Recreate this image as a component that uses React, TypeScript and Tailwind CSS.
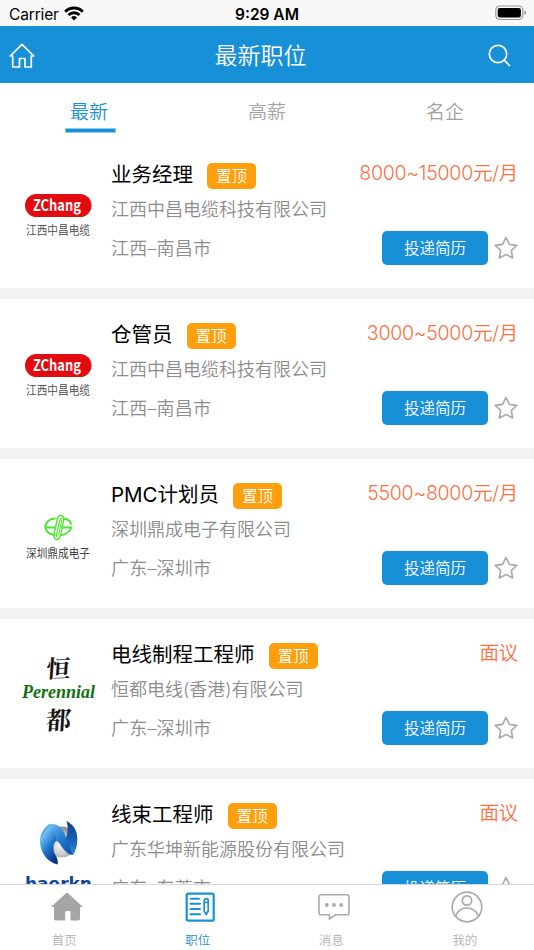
import type { ReactNode } from "react";

interface Job {
  id: number;
  title: string;
  company: string;
  location: string;
  salary: string;
  logo: ReactNode;
}

const SANS = "font-['Inter','Noto_Sans_CJK_SC',sans-serif]";

const ZChangLogo = () => (
  <svg width="93" height="80" viewBox="0 0 93 80">
    <rect x="7" y="20" width="66.500" height="23" rx="11.500" fill="#e30b0f" />
    <text
      x="15"
      y="37"
      textLength="48"
      lengthAdjust="spacingAndGlyphs"
      fontSize="15.500"
      fontWeight="700"
      fontFamily="'Noto Sans CJK SC', sans-serif"
      fill="#fff"
    >
      ZChang
    </text>
    <text
      x="8"
      y="60.500"
      textLength="64"
      lengthAdjust="spacingAndGlyphs"
      fontSize="12.500"
      fontWeight="350"
      fontFamily="'Noto Sans CJK SC', sans-serif"
      fill="#444"
    >
      江西中昌电缆
    </text>
  </svg>
);

const DingchengLogo = () => (
  <svg width="93" height="80" viewBox="0 0 93 80">
    <g fill="none" stroke="#4be62c" strokeLinecap="round">
      <path d="M36.500 24.500C30.500 25 27.300 29 27.300 33s3.700 7.500 9.200 8M28 33.500h9.500" strokeWidth="2" />
      <path d="M45.500 24.500c4.500.7 7.300 3 7.500 5.500M44 33.500h9.300c-.8 3.500-5 7-10.300 7.800" strokeWidth="1.800" />
      <path d="M43 21.500c-2.300 0-3.300 1.300-3.800 3.500l-3 15c-.5 3 0 5 1.800 5.300 2.300.2 4-1.500 4.600-4.300l3-14.500c.5-3-.4-5-2.600-5z" strokeWidth="1.300" />
      <path d="M43.500 24c-1.200 0-1.700 1-2 2.500l-2.800 13.500c-.3 1.500-.3 2.500-.5 3" strokeWidth="1.200" />
      <path d="m43.700 26-3.100 15" strokeWidth="1" />
    </g>
    <text
      x="8"
      y="64"
      textLength="64"
      lengthAdjust="spacingAndGlyphs"
      fontSize="12.500"
      fontFamily="'Noto Sans CJK SC', sans-serif"
      fill="#444"
    >
      深圳鼎成电子
    </text>
  </svg>
);

const PerennialLogo = () => (
  <svg width="93" height="100" viewBox="0 -10 93 100" className="-mt-[10px]">
    <g fontFamily="'Noto Serif CJK SC', 'Noto Sans CJK SC', serif" fontWeight="700" fill="#181414">
      <text x="30" y="23.500" fontSize="24" transform="skewX(-6) rotate(-2 40 16)">
        恒
      </text>
      <text x="35" y="75.500" fontSize="25" transform="skewX(-6) rotate(-2 40 66)">
        都
      </text>
    </g>
    <text
      x="4"
      y="44"
      textLength="73"
      lengthAdjust="spacingAndGlyphs"
      fontSize="18"
      fontWeight="700"
      fontStyle="italic"
      fontFamily="'Liberation Serif', serif"
      fill="#10700f"
    >
      Perennial
    </text>
  </svg>
);

const HaerknLogo = () => (
  <svg width="93" height="90" viewBox="0 0 93 90">
    <defs>
      <linearGradient id="ribbonLeft" x1=".1" y1="0" x2=".7" y2="1">
        <stop offset="0" stopColor="#0a50a8" />
        <stop offset=".25" stopColor="#6fc0f6" />
        <stop offset=".6" stopColor="#1f74cb" />
        <stop offset="1" stopColor="#0a2f86" />
      </linearGradient>
      <linearGradient id="ribbonMiddle" x1="0" y1="0" x2="1" y2="1">
        <stop offset="0" stopColor="#7ac4f5" />
        <stop offset=".45" stopColor="#2b83d6" />
        <stop offset="1" stopColor="#0a479e" />
      </linearGradient>
      <linearGradient id="ribbonRight" x1="0" y1="0" x2="0" y2="1">
        <stop offset="0" stopColor="#0a3f93" />
        <stop offset=".6" stopColor="#1763b5" />
        <stop offset="1" stopColor="#2f8fe0" />
      </linearGradient>
      <radialGradient id="ball" cx=".45" cy=".6" r=".6">
        <stop offset="0" stopColor="#f4f4f4" />
        <stop offset=".5" stopColor="#c8cacc" />
        <stop offset="1" stopColor="#8a8d90" />
      </radialGradient>
    </defs>
    <circle cx="43.500" cy="28" r="15.500" fill="url(#ball)" />
    <path d="M48.500 7c7 3.500 11 10 10.800 18-.2 7-1.500 12.500-4.300 16-4-3-7-8-8.500-14 2.500-4 4.500-12 2-20z" fill="url(#ribbonRight)" />
    <path d="M30 10.500c7-2 13 1.500 16 8 3 7 5 15 9 22.500-6-.8-10-6-13-11-3-4.500-7-4.500-9 0-3-7-5-13-3-19.500z" fill="url(#ribbonMiddle)" />
    <path d="M33 9.800c-6 2-11.300 9.700-11 18.200.4 10 6.500 20 17.700 22.500.3-3.500-.2-5.500-1.700-8.500-3.500-5.500-3.500-12 .5-15.500-1-5-3-11-5.500-16.700z" fill="url(#ribbonLeft)" />
    <text
      x="7"
      y="76"
      textLength="67"
      lengthAdjust="spacingAndGlyphs"
      fontSize="18.500"
      fontWeight="700"
      fontFamily="'DejaVu Sans', sans-serif"
      fill="#0d479d"
    >
      haerkn
    </text>
  </svg>
);

const JOBS: Job[] = [
  {
    id: 1,
    title: "业务经理",
    company: "江西中昌电缆科技有限公司",
    location: "江西–南昌市",
    salary: "8000~15000元/月",
    logo: <ZChangLogo />,
  },
  {
    id: 2,
    title: "仓管员",
    company: "江西中昌电缆科技有限公司",
    location: "江西–南昌市",
    salary: "3000~5000元/月",
    logo: <ZChangLogo />,
  },
  {
    id: 3,
    title: "PMC计划员",
    company: "深圳鼎成电子有限公司",
    location: "广东–深圳市",
    salary: "5500~8000元/月",
    logo: <DingchengLogo />,
  },
  {
    id: 4,
    title: "电线制程工程师",
    company: "恒都电线(香港)有限公司",
    location: "广东–深圳市",
    salary: "面议",
    logo: <PerennialLogo />,
  },
  {
    id: 5,
    title: "线束工程师",
    company: "广东华坤新能源股份有限公司",
    location: "广东–东莞市",
    salary: "面议",
    logo: <HaerknLogo />,
  },
];

const StatusBar = () => (
  <div className="grid h-[26px] shrink-0 grid-cols-3 items-center bg-[#f8f8f8] px-[9px] text-[15.5px] leading-none text-black">
    <div className="flex items-center gap-[6px] pt-[3px]">
      <span className="tracking-[-0.15px]">Carrier</span>
      <svg width="20" height="15" viewBox="0 0 20 15" className="-mt-[3px] -ml-[1px]">
        <g fill="none" stroke="#000" strokeWidth="2.900">
          <path d="M1.200 5.700a12.400 12.400 0 0 1 17.600 0" />
          <path d="M4.500 9a7.800 7.800 0 0 1 11 0" />
        </g>
        <path d="M10 14.500 7 11.500a4.300 4.300 0 0 1 6 0z" />
      </svg>
    </div>
    <div className="pt-[3px] text-center font-semibold">9:29 AM</div>
    <div className="flex justify-end">
      <svg width="32" height="16" viewBox="0 0 32 16" className="-mr-[2px]">
        <rect x=".8" y="1" width="27" height="13.500" rx="4" fill="none" stroke="#999" strokeWidth="1.200" />
        <rect x="2.700" y="2.900" width="23.200" height="9.700" rx="2" />
        <path d="M29.500 5.500c2 .8 2 3.700 0 4.500z" fill="#888" />
      </svg>
    </div>
  </div>
);

const Header = () => (
  <header className="flex h-[57px] shrink-0 items-center justify-between bg-[#1890d7] pr-[25px] pl-[9px] text-white">
    <svg width="27" height="26" viewBox="0 0 27 26" fill="none" stroke="currentColor" strokeWidth="1.700" strokeLinejoin="round" strokeLinecap="round" className="mt-[2px]">
      <path d="M3.700 13H1.200L13 1.300 24.800 13h-2.500v11H16v-8.500h-5.500V24H3.700z" />
    </svg>
    <h1 className="mr-[3px] pt-[3px] text-[23px] leading-none font-[350]">最新职位</h1>
    <svg width="23" height="23" viewBox="0 0 23 23" fill="none" stroke="currentColor" strokeWidth="1.700" strokeLinecap="round" className="mt-[1px] -mr-[2px]">
      <circle cx="10" cy="10" r="8.700" />
      <path d="m16.200 16.200 5.300 5.300" />
    </svg>
  </header>
);

const Tabs = () => (
  <div className="grid h-[56px] shrink-0 grid-cols-3 bg-white text-center text-[19px] leading-[60px] font-[350] text-[#a3a3a3]">
    <div className="flex flex-col items-center pl-[2px] text-[#1890d7]">
      <span className="mr-[2px] h-[45px]">最新</span>
      <span className="h-[5px] w-[51px] border border-[#8fc9ec] bg-[#1890d7]" />
    </div>
    <div>高薪</div>
    <div>名企</div>
  </div>
);

const Star = () => (
  <svg width="24" height="24" viewBox="0 0 24 24" fill="none" stroke="#aaa" strokeWidth="1.700" strokeLinejoin="round" className="-ml-[1px]">
    <path d="m12 1.500 3.300 6.800 7.500 1-5.500 5.200 1.400 7.500L12 18.500 5.300 22l1.400-7.500L1.200 9.300l7.500-1z" />
  </svg>
);

const JobCard = ({ job }: { job: Job }) => (
  <article className="flex h-[160px] shrink-0 border-b-[11px] border-[#f2f2f2] bg-white pr-[16px] pl-[18px]">
    <div className="mt-[35px] w-[93px] shrink-0">{job.logo}</div>
    <div className="min-w-0 flex-1 pt-[24px] leading-none font-[350]">
      <div className="flex h-[26px] items-center">
        <h2 className="-mt-[1px] text-[20.5px] font-normal text-black">{job.title}</h2>
        <span className="ml-[14px] h-[26px] w-[49px] rounded-[5px] bg-[#ff9f0d] text-center text-[15.5px] leading-[27px] text-white">
          置顶
        </span>
        <span className="-mt-[4px] ml-auto text-[19.5px] tracking-[-0.25px] text-[#ff7043]">{job.salary}</span>
      </div>
      <p className="mt-[11px] h-[18px] pt-px text-[18px] text-[#8c8c8c]">{job.company}</p>
      <div className="mt-[13px] flex h-[34px] items-center">
        <span className="pt-[2px] text-[18px] tracking-[0.2px] text-[#8c8c8c]">{job.location}</span>
        <button type="button" className="mr-[7px] ml-auto h-[34px] w-[106px] rounded-[5px] bg-[#1890d7] pt-px text-[15.5px] text-white">
          投递简历
        </button>
        <Star />
      </div>
    </div>
  </article>
);

const NAV_ITEMS = [
  {
    label: "首页",
    active: false,
    icon: (
      <svg width="32" height="32" viewBox="0 0 32 32" fill="#a5a5a5">
        <path d="M15 2.200q1-.9 2 0l14.200 13q.6.800-.4.800H29v11.500a2 2 0 0 1-2 2h-7.500v-8.200q0-1.300-1.300-1.300h-2.700q-1.300 0-1.300 1.300v8.200H5a2 2 0 0 1-2-2V16H1.200q-1 0-.4-.8z" />
      </svg>
    ),
  },
  {
    label: "职位",
    active: true,
    icon: (
      <svg width="32" height="32" viewBox="0 0 32 32" fill="none" stroke="#1890d7">
        <rect x="2.700" y="2.700" width="27" height="27" rx="1.500" strokeWidth="2.200" />
        <path d="M7 7.700h8M6.500 12.800h9.500M6.500 18h9.500M6.500 23.300h9.500" strokeWidth="2" strokeLinecap="round" />
        <path d="M20.200 9.500c0-2.500 4-2.500 4 0v10.500L22.200 23.500l-2-3.500zM20.200 11.500h4" strokeWidth="1.700" strokeLinejoin="round" />
      </svg>
    ),
  },
  {
    label: "消息",
    active: false,
    icon: (
      <svg width="32" height="32" viewBox="0 0 32 32" fill="none" stroke="#aaa">
        <path d="M3 3.700h26a2 2 0 0 1 2 2v16.100a2 2 0 0 1-2 2H17.500L11.500 28v-4.200H3a2 2 0 0 1-2-2V5.700a2 2 0 0 1 2-2z" strokeWidth="1.600" strokeLinejoin="miter" />
        <g fill="#aaa" stroke="none">
          <circle cx="8.800" cy="14" r="1.900" />
          <circle cx="16" cy="14" r="1.900" />
          <circle cx="23.200" cy="14" r="1.900" />
        </g>
      </svg>
    ),
  },
  {
    label: "我的",
    active: false,
    icon: (
      <svg width="32" height="32" viewBox="0 0 32 32" fill="none" stroke="#aaa" strokeWidth="1.700">
        <circle cx="16" cy="16" r="14.800" />
        <circle cx="16" cy="9.500" r="4.700" />
        <path d="M4.500 25.300c2-5.500 6.200-8.300 11.500-8.300s9.500 2.800 11.500 8.300" />
      </svg>
    ),
  },
];

const BottomNav = () => (
  <nav className="grid h-[66px] shrink-0 grid-cols-4 border-t border-[#d8d8d8] bg-white">
    {NAV_ITEMS.map((item) => (
      <div key={item.label} className="flex flex-col items-center pt-[6px]">
        {item.icon}
        <span
          className={`mt-[11px] mr-[5px] text-[12.5px] leading-[13px] font-[350] ${
            item.active ? "text-[#1890d7]" : "text-[#b2b2b2]"
          }`}
        >
          {item.label}
        </span>
      </div>
    ))}
  </nav>
);

export default function App() {
  return (
    <div className={`flex h-[950px] w-[534px] flex-col overflow-hidden bg-white ${SANS}`}>
      <StatusBar />
      <Header />
      <Tabs />
      <main className="flex min-h-0 flex-1 flex-col overflow-hidden">
        {JOBS.map((job) => (
          <JobCard key={job.id} job={job} />
        ))}
      </main>
      <BottomNav />
    </div>
  );
}
